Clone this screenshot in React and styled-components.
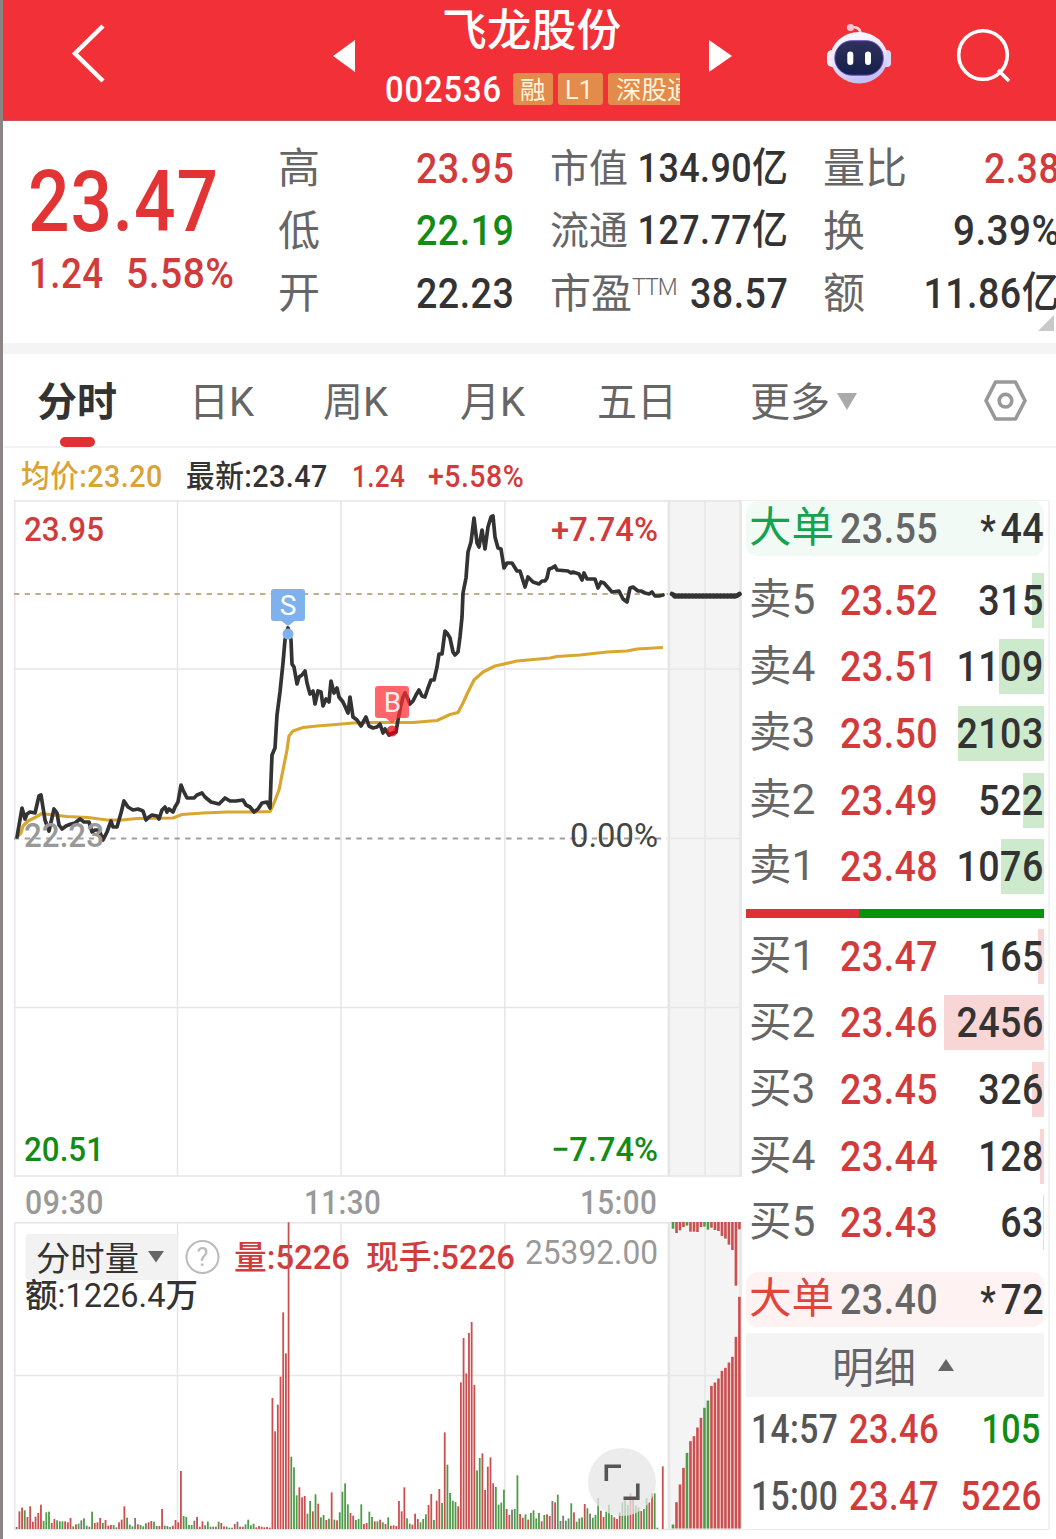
import React from "react";
import styled, { createGlobalStyle } from "styled-components";

const GlobalStyle = createGlobalStyle`
  * {
    box-sizing: border-box;
  }
  body {
    margin: 0;
    background: #fff;
    font-family: Roboto, "Noto Sans CJK SC", sans-serif;
    color: #333;
  }
`;

const RED = "#d13b3b";
const GREEN = "#128c16";
const DARK = "#333333";
const GRAY = "#666666";
const GOLD = "#d9a336";

const Page = styled.div`
  width: 1056px;
  height: 1539px;
  overflow: hidden;
  border-left: 3px solid #8b8686;
  background: #fff;
`;

const Txt = styled.span`
  display: inline-block;
  white-space: nowrap;
  line-height: 1;
  letter-spacing: ${(props) => props.$ls ?? 0.5}px;
  font-size: ${(props) => props.$size || 43}px;
  font-weight: ${(props) => props.$weight || 500};
  color: ${(props) => props.$color || DARK};
  transform: scaleX(${(props) => props.$sx || 0.875});
  transform-origin: ${(props) => (props.$right ? "right" : "left")} center;
`;

/* header */
const Header = styled.header`
  display: flex;
  align-items: center;
  height: 121px;
  padding-left: 66px;
  background: #f23037;
  border-bottom: 1px solid #c9555a;

  svg {
    flex: none;
    margin-top: -8px;
  }
`;

const TitleBox = styled.div`
  width: 298px;
  margin: 0 23px 0 30px;
  height: 120px;
  display: flex;
  flex-direction: column;
`;

const Title = styled.div`
  padding: 8px 0 0 57px;
  height: 60px;
  line-height: 46px;
  font-size: 44.8px;
  font-weight: 500;
  color: #fff;
`;

const CodeRow = styled.div`
  display: flex;
  align-items: center;
  height: 58px;
  overflow: hidden;
`;

const Code = styled.div`
  width: 128px;
  flex: none;
`;

const Tag = styled.div`
  flex: none;
  height: 32px;
  width: ${(props) => props.$w}px;
  margin-right: 5px;
  padding-left: 7px;
  border-radius: 3px;
  background: #e38b4a;
  color: #fff3dc;
  font-size: 25.5px;
  line-height: 34px;
  white-space: nowrap;
  overflow: hidden;

  &:last-child {
    padding-left: 8px;
    border-radius: 3px 0 0 3px;
    margin-right: 0;
  }
`;

/* quote panel */
const Quote = styled.section`
  display: flex;
  height: 222px;
  padding-left: 25px;
  overflow: hidden;
`;

const Main = styled.div`
  width: 250px;
  padding-top: 39px;
  flex: none;
`;

const BigPrice = styled.div`
  height: 86px;
`;

const Change = styled.div`
  display: flex;
  height: 56px;
  align-items: center;
  padding-left: 1px;

  span:first-child {
    width: 97px;
  }
`;

const StatColumn = styled.div`
  flex: none;
  width: ${(props) => props.$w}px;
  margin-right: ${(props) => props.$gap}px;
  padding-top: 16px;
`;

const Stat = styled.div`
  display: flex;
  align-items: center;
  height: 62.6px;
  white-space: nowrap;
`;

const StatLabel = styled.span`
  flex: none;
  padding-top: 2px;
  font-size: ${(props) => props.$size || 42}px;
  line-height: 1;
  color: ${GRAY};

  sup {
    display: inline-block;
    font-size: 23px;
    line-height: 1;
    letter-spacing: -1px;
    vertical-align: 13px;
    font-weight: 300;
  }
`;

const StatValue = styled.div`
  flex: 1;
  min-width: 0;
  display: flex;
  justify-content: flex-end;
`;

const Corner = styled.div`
  height: 0;
  width: 0;
  margin-left: 215px;
  margin-top: -10px;
  border-left: 16px solid transparent;
  border-bottom: 16px solid #c9c9c9;
`;

const Band = styled.div`
  height: 11px;
  background: #f4f4f4;
`;

/* tabs */
const Tabs = styled.nav`
  display: flex;
  height: 94px;
  border-bottom: 2px solid #f2f2f2;
  padding-left: 34px;

  svg {
    margin-top: 1px;
    margin-left: -1px;
  }
`;

const Tab = styled.div`
  position: relative;
  width: ${(props) => props.$w}px;
  line-height: 97px;
  font-size: 40px;
  font-weight: ${(props) => (props.$active ? 700 : 400)};
  color: ${(props) => (props.$active ? DARK : GRAY)};
  white-space: nowrap;

  &::after {
    content: "";
    display: ${(props) => (props.$active ? "block" : "none")};
    position: absolute;
    left: 23px;
    bottom: -1px;
    width: 35px;
    height: 10px;
    border-radius: 5px;
    background: #e03034;
  }
`;

const Down = styled.span`
  display: inline-block;
  margin-left: 7px;
  vertical-align: 6px;
  border: 10px solid transparent;
  border-top: 17px solid #aaa;
  border-bottom: 0;
`;

const InfoRow = styled.div`
  display: flex;
  align-items: center;
  height: 52px;
  padding: 5px 0 0 18px;
`;

const InfoCell = styled.div`
  width: ${(props) => props.$w}px;
  display: flex;
`;

/* body */
const Body = styled.div`
  display: flex;
  height: 1031px;
`;

const Charts = styled.div`
  width: 729px;
  margin-left: 10px;
  flex: none;

  svg {
    display: block;
  }
`;

const TimeAxis = styled.div`
  display: flex;
  height: 45px;
  align-items: center;
  padding: 4px 0 0 12px;
`;

const TimeCell = styled.div`
  width: ${(props) => props.$w}px;
  display: flex;
`;

const Book = styled.div`
  width: 308px;
  height: 1030px;
  padding: 0 4px;
  border-right: 2px solid #f3f3f3;
  border-top: 1px solid #f0f0f0;
  border-bottom: 1px solid #ececec;
`;

const BigOrder = styled.div`
  display: flex;
  align-items: center;
  height: 55px;
  padding-left: 3px;
  border-radius: 12px;
  background: ${(props) => props.$bg};
`;

const Star = styled.i`
  display: inline-block;
  font-style: normal;
  font-size: 40px;
  line-height: 1;
  height: 20px;
  vertical-align: -1px;
  margin-right: 5px;
`;

const Level = styled.div`
  display: flex;
  align-items: center;
  height: 66.6px;
  padding-left: 3px;
`;

const Name = styled.div`
  width: 91px;
  flex: none;
  font-size: 42.5px;
  line-height: 1;
  white-space: nowrap;
  color: ${(props) => props.$color || GRAY};
`;

const Price = styled.div`
  width: 104px;
  flex: none;
  display: flex;
`;

const VolumeCell = styled.div`
  flex: 1;
  min-width: 0;
  height: 55px;
  display: flex;
  align-items: center;
  justify-content: flex-end;
  background: linear-gradient(${(props) => props.$tint || "transparent"}, ${(props) => props.$tint || "transparent"}) right /
    ${(props) => props.$bar || 0}px 100% no-repeat;
`;

const Sells = styled.div`
  padding-top: 11px;
`;

const Buys = styled.div`
  padding: 5px 0 16px;
`;

const Ratio = styled.div`
  display: flex;
  height: 9px;
  margin-top: 9px;
  background: #089408;

  &::before {
    content: "";
    width: 113px;
    background: #e13035;
  }
`;

const DetailBar = styled.div`
  display: flex;
  align-items: center;
  height: 64px;
  margin-top: 6px;
  padding-left: 86px;
  font-size: 42px;
  color: ${GRAY};
  background: #f4f4f4;
`;

const Up = styled.span`
  margin-left: 22px;
  border: 8px solid transparent;
  border-bottom: 12px solid #666;
  border-top: 0;
`;

const Trade = styled.div`
  display: flex;
  align-items: center;
  height: 66.5px;
  padding: 0 3px 0 5px;
`;

const TradeCell = styled.div`
  flex: ${(props) => (props.$w ? "none" : 1)};
  width: ${(props) => props.$w}px;
  display: flex;
  justify-content: ${(props) => (props.$w ? "flex-start" : "flex-end")};
`;

const pricePath =
  "M17 837L22 808L25 819L27 814L30 812L35 813L39 796L41 795L45 820L49 831L54 809L57 813L59 825L62 829L66 826L71 824L75 823L80 819L84 822L89 822L92 832L95 830L99 830L103 840L107 832L111 821L113 827L117 827L121 813L124 801L128 807L133 810L138 809L143 811L146 820L149 817L152 815L157 816L159 819L162 810L165 807L167 812L169 809L173 812L175 807L178 802L181 785L183 790L187 798L191 798L194 798L197 795L202 793L205 797L211 802L219 804L225 798L230 801L236 801L243 800L246 805L250 807L254 812L258 809L262 803L267 802L270 808L271 780L272 755L275 748L277 715L280 692L283 663L285 640L288 628L291 640L292 664L294 667L297 684L299 677L302 675L305 671L307 683L310 694L313 691L315 704L318 691L321 692L323 706L326 699L329 702L331 681L334 693L337 688L339 697L343 702L348 713L350 697L353 717L357 720L361 726L366 717L369 726L373 728L377 727L380 724L383 733L385 729L389 735L393 733L396 732L398 720L401 705L403 697L405 693L408 699L410 704L413 701L416 695L419 690L422 696L425 697L428 688L431 680L434 680L437 667L439 654L442 654L445 631L447 633L450 638L453 652L455 655L458 652L460 637L462 617L463 593L466 578L468 552L471 542L474 518L477 543L479 547L482 530L485 549L488 527L491 517L493 516L495 537L498 548L501 549L504 568L507 563L512 563L517 571L520 571L525 587L528 577L533 582L539 584L542 581L545 581L547 578L549 569L552 568L555 566L557 570L568 571L571 573L573 572L579 574L582 580L584 573L587 579L595 579L598 588L601 582L604 583L612 592L619 591L623 599L627 602L630 588L633 587L638 591L641 591L645 593L649 594L652 592L655 596L659 596L663 595";

const avgPath =
  "M17 837L21 833L23 826L28 821L36 817L42 813.5L53 815L67 816.5L88 817.5L107 820L122 820L137 818.5L173 818L182 814.5L203 813L227 812L247 812L270 811.5L274 803L279 790L283 770L287 750L289 736L293 731L303 727.5L317 726L330 725L353 723L370 722.5L413 722.5L437 720.5L450 714.5L458 712.5L463 703L468 692L474 680L483 672L495 666L517 661L550 658L557 656.5L580 655L607 652L627 651L637 649L663 647.5";

// one entry per minute: r up, g down, k flat + height
const volumes = `k6 r53 r64 g56 r36 r68 r22 r37 r48 r73 g24 g50 g52 r18 r30 g26 g23 g23 r23 r20
r33 g8 r14 g16 k26 g32 k10 k7 g52 r18 r20 r33 g18 r27 r10 r12 g12 k5 r20 r28
r68 g34 g13 g8 k33 r14 g12 g8 g17 r20 r24 g22 k9 r9 r60 g10 k9 g6 r10 r27
r20 r174 g39 g36 g12 g12 k25 r36 r7 r23 g11 g22 g7 k7 k7 g22 r18 r8 k7 g4
g4 r15 k22 r7 k7 g14 g28 g11 g16 r5 r9 r7 r5 r6 r4 r393 r293 r373 r457 r650
r527 r920 g217 g185 g101 r125 r95 r99 g46 g84 r53 g104 r76 g35 g42 r27 g31 r110 g28 r26
g50 g112 g137 g74 r48 r40 g27 g30 g74 r15 r18 g52 g36 r23 g23 r28 g20 r15 g35 r10
r11 r9 r84 r53 r125 g32 g16 r13 r46 r30 g20 g30 g44 r72 r105 g27 r85 r120 g78 r290
g193 g108 g85 g81 r68 r440 r573 r467 r588 r621 r432 g176 g213 r227 r117 r187 r215 r137 g126 g73
g79 g118 r60 r42 k58 g60 g161 r45 r34 g44 r28 g48 g56 g32 g48 r23 g42 r44 r39 k84
r80 g103 k24 k40 g25 k32 g77 r50 g22 g32 g35 r75 g62 k46 g34 g42 g93 r55 r36 g52
g72 g42 r35 r30 r50 g80 g90 g72 r107 r95 g70 g65 r54 g60 g93 r80 r107 g107 g4 k0 r188`.split(/\s+/);

const auctionUp =
  "g12 r79 r132 r182 g227 r262 r277 r303 r332 g362 g384 r428 r438 r450 r473 r482 r498 r515 r575 r695".split(" ");
const auctionDown =
  "g20 r33 r25 r15 g11 r29 r29 r30 r15 g14 g23 r17 r24 r27 r42 r50 r68 r84 r191 r22".split(" ");

const barColor = { r: "#cb4f4f", g: "#4f9c48", k: "#7d7878" };

const Label = ({ x, y, w, size = 34, weight = 500, fill, children }) => (
  <text
    x={x}
    y={y}
    textLength={w}
    lengthAdjust='spacingAndGlyphs'
    fontSize={size}
    fontWeight={weight}
    fill={fill}
  >
    {children}
  </text>
);

const PriceChart = () => (
  <svg width='729' height='677' viewBox='13 500 729 677'>
    <rect x='667.5' y='500' width='74' height='677' fill='#f4f4f4' />
    <g stroke='#e6e6e6' strokeWidth='1.5' fill='none'>
      <path d='M14 501H741M14 669H741M14 1007.5H741M14 1176H741M668 838.5H741' />
      <path d='M14.7 500V1177M177.5 500V1177M341 500V1177M504.8 500V1177M705 500V1177' />
      <path d='M669 500V1177M740.5 500V1177' strokeWidth='2.5' />
    </g>
    <path d='M14 594H668' stroke='#bfae83' strokeWidth='1.8' strokeDasharray='5.3 5.4' />
    <path d='M14 838.5H667' stroke='#a0a0a0' strokeWidth='1.8' strokeDasharray='5.3 5.4' />
    <path d={avgPath} fill='none' stroke='#d9a630' strokeWidth='3.2' strokeLinejoin='round' />
    <path d={pricePath} fill='none' stroke='#333' strokeWidth='3.7' strokeLinejoin='round' strokeLinecap='round' />
    <path d='M672 594L675.5 596H736.5L739.5 594' fill='none' stroke='#333' strokeWidth='4.6' strokeLinejoin='round' strokeLinecap='round' />
    <path d='M675 596H738' fill='none' stroke='#333' strokeWidth='5.4' strokeDasharray='0 3.5' strokeLinecap='round' />

    <Label x='24' y='541' w='80' fill={RED}>23.95</Label>
    <Label x='551' y='541' w='107' fill={RED}>+7.74%</Label>
    <Label x='24' y='847' w='80' fill='#999'>22.23</Label>
    <Label x='570' y='847' w='88' weight='400' fill='#444'>0.00%</Label>
    <Label x='24' y='1161' w='80' fill={GREEN}>20.51</Label>
    <Label x='551' y='1161' w='107' fill={GREEN}>−7.74%</Label>

    <path d='M274 589h28a3 3 0 0 1 3 3v26a3 3 0 0 1-3 3h-7.500l-6.500 5l-6.500-5H274a3 3 0 0 1-3-3v-26a3 3 0 0 1 3-3z' fill='#7fb1ec' />
    <circle cx='288' cy='634' r='5.5' fill='#7fb1ec' />
    <text x='288' y='614.500' textAnchor='middle' fontSize='28' fill='#fff'>S</text>
    <g opacity='0.72'>
      <path d='M378 686h28a3 3 0 0 1 3 3v26a3 3 0 0 1-3 3h-7.500l-6.500 5l-6.500-5H378a3 3 0 0 1-3-3v-26a3 3 0 0 1 3-3z' fill='#ff2b30' />
      <circle cx='392' cy='731' r='5.5' fill='#e60010' />
    </g>
    <text x='392.500' y='712' textAnchor='middle' fontSize='28' fill='#fff' fillOpacity='0.9'>B</text>
  </svg>
);

const VolumeChart = () => (
  <svg width='729' height='309' viewBox='13 1222 729 309'>
    <rect x='667.5' y='1222' width='74' height='307' fill='#f4f4f4' />
    <g stroke='#e6e6e6' strokeWidth='1.500' fill='none'>
      <path d='M14 1222.8H741M14 1375.500H741M14 1529.500H741' />
      <path d='M14.7 1222V1529M177.500 1222V1529M341 1222V1529M504.800 1222V1529M705 1222V1529' />
      <path d='M669 1222V1529M740.500 1222V1529' strokeWidth='2.500' />
    </g>

    <rect x='25.500' y='1234' width='152' height='46' rx='4' fill='#f2f2f2' />
    <Label x='36' y='1271' w='103' size='34' weight='400' fill={DARK}>分时量</Label>
    <path d='M148 1251H164L156 1262.500Z' fill='#666' />
    <circle cx='202.500' cy='1257' r='16' fill='#fff' stroke='#bbb' strokeWidth='2' />
    <text x='202.500' y='1266' textAnchor='middle' fontSize='25' fill='#bbb'>?</text>
    <Label x='234' y='1269' w='116' size='33.500' fill={RED}>量:5226</Label>
    <Label x='366' y='1269' w='149' size='33.500' fill={RED}>现手:5226</Label>
    <Label x='525' y='1264' w='133' fill='#999' weight='400'>25392.00</Label>
    <Label x='25' y='1307' w='173' size='33.500' weight='450' fill={DARK}>额:1226.4万</Label>

    {volumes.map((v, i) => {
      const h = Number(v.slice(1)) / 3;
      return <rect key={i} x={15.8 + i * 2.692} y={1529 - h} width='1.8' height={h} fill={barColor[v[0]]} />;
    })}
    {auctionUp.map((v, i) => {
      const h = Number(v.slice(1)) / 3;
      return <rect key={i} x={671.7 + i * 3.495} y={1528.500 - h} width='2.600' height={h} fill={barColor[v[0]]} />;
    })}
    {auctionDown.map((v, i) => (
      <rect key={i} x={671.7 + i * 3.495} y='1222' width='2.600' height={Number(v.slice(1)) / 3} fill={barColor[v[0]]} />
    ))}

    <circle cx='622' cy='1482' r='34' fill='#e6e6e6' fillOpacity='0.75' />
    <path d='M606.300 1481V1466.300H621M623.500 1498.300H637.800V1483.500' fill='none' stroke='#555' strokeWidth='3.600' />
  </svg>
);

const RobotSvg = styled.svg`
  && {
    margin-top: -13px;
  }
`;

const Robot = () => (
  <RobotSvg width='66' height='62' viewBox='823.500 23 66 62'>
    <defs>
      <linearGradient id='shell' x1='0' y1='0' x2='0.3' y2='1'>
        <stop offset='0' stopColor='#fff' />
        <stop offset='0.6' stopColor='#e9e4fb' />
        <stop offset='1' stopColor='#c3c0f5' />
      </linearGradient>
      <linearGradient id='visor' x1='0' y1='0' x2='0' y2='1'>
        <stop offset='0' stopColor='#30305c' />
        <stop offset='1' stopColor='#15204a' />
      </linearGradient>
    </defs>
    <path d='M848 28C853 26 858 28 858 34' fill='none' stroke='#fbd3dc' strokeWidth='2.600' />
    <circle cx='848' cy='27.500' r='3.600' fill='#f9c3cf' />
    <rect x='824.500' y='50' width='10' height='17' rx='5' fill='#f7eefc' />
    <rect x='880' y='50' width='8.500' height='17' rx='4' fill='#ddd5fb' />
    <ellipse cx='856.500' cy='57.700' rx='28.500' ry='25.700' fill='url(#shell)' />
    <rect x='832.300' y='40.700' width='48.500' height='34.500' rx='17' fill='url(#visor)' stroke='#6a4fc0' strokeWidth='1' />
    <rect x='844.800' y='51.500' width='6' height='13.500' rx='3' fill='#fff' />
    <rect x='862.500' y='51.500' width='6' height='13.500' rx='3' fill='#fff' />
  </RobotSvg>
);

const stats = [
  {
    w: 236,
    gap: 36,
    rows: [
      ["高", "23.95", RED],
      ["低", "22.19", GREEN],
      ["开", "22.23", DARK],
    ],
  },
  {
    w: 238,
    gap: 35,
    size: 39,
    rows: [
      ["市值", "134.90亿", DARK],
      ["流通", "127.77亿", DARK],
      ["市盈", "38.57", DARK],
    ],
  },
  {
    w: 237,
    gap: 0,
    rows: [
      ["量比", "2.38", RED],
      ["换", "9.39%", DARK],
      ["额", "11.86亿", DARK],
    ],
  },
];

const sells = [
  ["卖5", "23.52", "315", 12],
  ["卖4", "23.51", "1109", 45],
  ["卖3", "23.50", "2103", 86],
  ["卖2", "23.49", "522", 21],
  ["卖1", "23.48", "1076", 43],
];

const buys = [
  ["买1", "23.47", "165", 6],
  ["买2", "23.46", "2456", 100],
  ["买3", "23.45", "326", 12.5],
  ["买4", "23.44", "128", 4.5],
  ["买5", "23.43", "63", 1.5],
];

const Levels = ({ rows, tint }) =>
  rows.map(([name, price, volume, bar]) => (
    <Level key={name}>
      <Name>{name}</Name>
      <Price>
        <Txt $color={RED}>{price}</Txt>
      </Price>
      <VolumeCell $bar={bar} $tint={tint}>
        <Txt $right>{volume}</Txt>
      </VolumeCell>
    </Level>
  ));

const App = () => {
  return (
    <Page>
      <GlobalStyle />
      <Header>
        <svg width='40' height='64' viewBox='69 25 40 64'>
          <path d='M103 27L75 54.500L103 82' fill='none' stroke='#fff' strokeWidth='4.500' />
        </svg>
        <svg width='246' height='34' viewBox='109 39 246 34'>
          <path d='M333 56L355 40V72Z' fill='#fff' />
        </svg>
        <TitleBox>
          <Title>飞龙股份</Title>
          <CodeRow>
            <Code>
              <Txt $size={37} $color='#fff' $sx={0.885} $ls={1}>002536</Txt>
            </Code>
            <Tag $w={40}>融</Tag>
            <Tag $w={45}>L1</Tag>
            <Tag $w={72}>深股通</Tag>
          </CodeRow>
        </TitleBox>
        <svg width='120' height='34' viewBox='706 39 120 34'>
          <path d='M732 56L709 40V72Z' fill='#fff' />
        </svg>
        <Robot />
        <svg width='130' height='62' viewBox='892 25 130 62'>
          <circle cx='983' cy='55' r='24.300' fill='none' stroke='#fff' strokeWidth='3.600' />
          <path d='M998 70L1009 81' stroke='#fff' strokeWidth='3.600' />
        </svg>
      </Header>

      <Quote>
        <Main>
          <BigPrice>
            <Txt $size={85} $color='#e23434' $sx={0.86} $ls={1}>23.47</Txt>
          </BigPrice>
          <Change>
            <Txt $color={RED} $size={42}>1.24</Txt>
            <Txt $color={RED} $size={42} $sx={0.93}>5.58%</Txt>
          </Change>
        </Main>
        {stats.map((col, c) => (
          <StatColumn key={c} $w={col.w} $gap={col.gap}>
            {col.rows.map(([label, value, color]) => (
              <Stat key={label}>
                <StatLabel $size={label === "市盈" ? 41 : col.size}>
                  {label}
                  {label === "市盈" && <sup>TTM</sup>}
                </StatLabel>
                <StatValue>
                  <Txt
                    $right
                    $color={color}
                    $size={c === 1 && value.length > 5 ? 41 : 43}
                    $sx={value.endsWith("%") ? 0.9 : 0.875}
                  >
                    {value}
                  </Txt>
                </StatValue>
              </Stat>
            ))}
            {c === 2 && <Corner />}
          </StatColumn>
        ))}
      </Quote>
      <Band />

      <Tabs>
        <Tab $w={152} $active>分时</Tab>
        <Tab $w={134}>日K</Tab>
        <Tab $w={137}>周K</Tab>
        <Tab $w={137}>月K</Tab>
        <Tab $w={153}>五日</Tab>
        <Tab $w={233}>
          更多
          <Down />
        </Tab>
        <svg width='46' height='92' viewBox='982 355 46 92'>
          <path
            d='M995.500 382H1015.500L1025 400.700L1015.500 419H995.500L986 400.700Z'
            fill='none'
            stroke='#999'
            strokeWidth='3.600'
            strokeLinejoin='round'
          />
          <circle cx='1005.500' cy='400.700' r='6.300' fill='none' stroke='#999' strokeWidth='3.600' />
        </svg>
      </Tabs>

      <InfoRow>
        <InfoCell $w={165}>
          <Txt $size={31} $color={GOLD} $sx={0.925}>均价:23.20</Txt>
        </InfoCell>
        <InfoCell $w={166}>
          <Txt $size={31} $sx={0.925}>最新:23.47</Txt>
        </InfoCell>
        <InfoCell $w={76}>
          <Txt $size={31} $color={RED} $sx={0.84}>1.24</Txt>
        </InfoCell>
        <InfoCell $w={110}>
          <Txt $size={31} $color={RED} $sx={0.92}>+5.58%</Txt>
        </InfoCell>
      </InfoRow>

      <Body>
        <Charts>
          <PriceChart />
          <TimeAxis>
            <TimeCell $w={279}>
              <Txt $size={34} $color='#999' $sx={0.89}>09:30</Txt>
            </TimeCell>
            <TimeCell $w={276}>
              <Txt $size={34} $color='#999' $sx={0.87}>11:30</Txt>
            </TimeCell>
            <Txt $size={34} $color='#999' $sx={0.87}>15:00</Txt>
          </TimeAxis>
          <VolumeChart />
        </Charts>

        <Book>
          <BigOrder $bg='#f2faf5'>
            <Name $color='#14a350'>大单</Name>
            <Price>
              <Txt $color={GRAY}>23.55</Txt>
            </Price>
            <VolumeCell>
              <Txt $right><Star>*</Star>44</Txt>
            </VolumeCell>
          </BigOrder>
          <Sells>
            <Levels rows={sells} tint='#cdeacc' />
          </Sells>
          <Ratio />
          <Buys>
            <Levels rows={buys} tint='#f8d6d6' />
          </Buys>
          <BigOrder $bg='#fef3f2'>
            <Name $color='#e0453c'>大单</Name>
            <Price>
              <Txt $color={GRAY}>23.40</Txt>
            </Price>
            <VolumeCell>
              <Txt $right><Star>*</Star>72</Txt>
            </VolumeCell>
          </BigOrder>
          <DetailBar>
            明细
            <Up />
          </DetailBar>
          <Trade>
            <TradeCell $w={98}>
              <Txt $size={40} $color='#555' $sx={0.84}>14:57</Txt>
            </TradeCell>
            <TradeCell $w={100}>
              <Txt $size={40} $color={RED} $sx={0.86}>23.46</Txt>
            </TradeCell>
            <TradeCell>
              <Txt $right $size={40} $color={GREEN} $sx={0.85}>105</Txt>
            </TradeCell>
          </Trade>
          <Trade>
            <TradeCell $w={98}>
              <Txt $size={40} $color='#555' $sx={0.84}>15:00</Txt>
            </TradeCell>
            <TradeCell $w={100}>
              <Txt $size={40} $color={RED} $sx={0.86}>23.47</Txt>
            </TradeCell>
            <TradeCell>
              <Txt $right $size={40} $color={RED}>5226</Txt>
            </TradeCell>
          </Trade>
        </Book>
      </Body>
    </Page>
  );
};

export default App;
